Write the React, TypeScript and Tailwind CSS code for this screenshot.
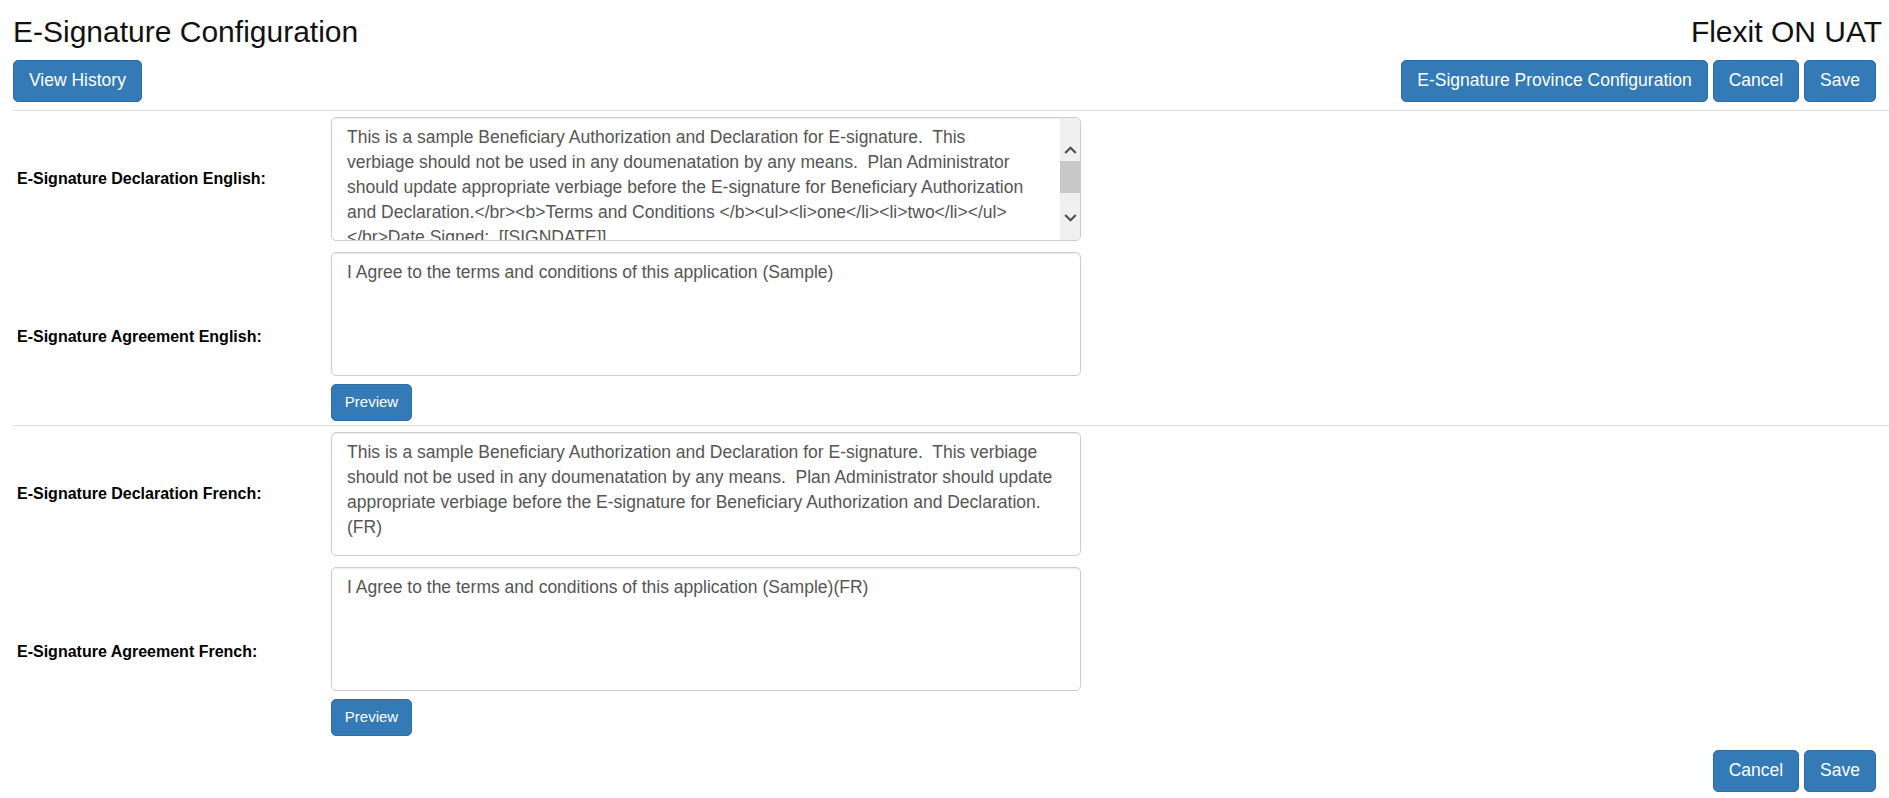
import React from "react";

// ─── Data ─────────────────────────────────────────────────────────────────────

const declarationEn = [
  "This is a sample Beneficiary Authorization and Declaration for E-signature.  This",
  "verbiage should not be used in any doumenatation by any means.  Plan Administrator",
  "should update appropriate verbiage before the E-signature for Beneficiary Authorization",
  "and Declaration.</br><b>Terms and Conditions </b><ul><li>one</li><li>two</li></ul>",
  "</br>Date Signed:  [[SIGNDATE]]",
].join("\n");

const declarationFr =
  "This is a sample Beneficiary Authorization and Declaration for E-signature.  This verbiage should not be used in any doumenatation by any means.  Plan Administrator should update appropriate verbiage before the E-signature for Beneficiary Authorization and Declaration.(FR)";

const btn =
  "h-[42px] rounded-[5px] border border-[#2e6da4] bg-[#337ab7] px-[15px] text-[17.5px] leading-none text-white";

const box =
  "h-[124px] overflow-hidden rounded-[5px] border border-[#ccc] bg-white shadow-[inset_0_1px_1px_rgba(0,0,0,0.075)]";

// ─── Pieces ───────────────────────────────────────────────────────────────────

function FakeTextarea({ text, scroll }: { text: string; scroll?: boolean }) {
  return (
    <div className={`${box} flex`}>
      <div
        className={`min-w-0 flex-1 px-[15px] py-[7px] text-[17.5px] leading-[25px] text-[#555] ${
          scroll ? "whitespace-pre" : "whitespace-pre-wrap"
        }`}
      >
        {text}
      </div>
      {scroll && (
        <div className="flex w-[20px] shrink-0 flex-col items-center bg-[#f0f0f0]">
          <svg className="mt-[28px]" width="13" height="8" viewBox="0 0 13 8">
            <path d="M1.2 7 L6.5 1.8 L11.8 7" fill="none" stroke="#505050" strokeWidth="2.2" />
          </svg>
          <div className="mt-[7px] h-[32px] w-full bg-[#c8c8c8]" />
          <svg className="mt-[21px]" width="13" height="8" viewBox="0 0 13 8">
            <path d="M1.2 1 L6.5 6.2 L11.8 1" fill="none" stroke="#505050" strokeWidth="2.2" />
          </svg>
        </div>
      )}
    </div>
  );
}

function Row({
  label,
  children,
}: {
  label: string;
  children: React.ReactNode;
}) {
  return (
    <div className="grid grid-cols-[318px_750px] items-center">
      <label className="pl-[4px] text-[16px] font-bold text-black">{label}</label>
      <div className="flex flex-col">{children}</div>
    </div>
  );
}

function PreviewButton() {
  return (
    <button className="mt-[8px] h-[37px] w-[81px] rounded-[5px] border border-[#2e6da4] bg-[#337ab7] text-[15px] text-white">
      Preview
    </button>
  );
}

// ─── Page ─────────────────────────────────────────────────────────────────────

export default function App() {
  return (
    <div className="min-h-[798px] bg-white px-[13px] font-['Liberation_Sans',Arial,sans-serif]">
      {/* Header */}
      <div className="flex items-start justify-between pt-[15px]">
        <h3 className="text-[30px] leading-[33px] text-[#111]">E-Signature Configuration</h3>
        <h3 className="-mr-[6px] text-[30px] leading-[33px] text-[#111]">Flexit ON UAT</h3>
      </div>

      <div className="mt-[12px] flex justify-between">
        <button className={btn}>View History</button>
        <div className="flex gap-[5px]">
          <button className={btn}>E-Signature Province Configuration</button>
          <button className={btn}>Cancel</button>
          <button className={btn}>Save</button>
        </div>
      </div>

      <hr className="-mr-[13px] mt-[8px] border-t border-[#ddd]" />

      {/* English */}
      <div className="mt-[6px] flex flex-col">
        <Row label="E-Signature Declaration English:">
          <FakeTextarea text={declarationEn} scroll />
        </Row>
        <div className="mt-[11px]">
          <Row label="E-Signature Agreement English:">
            <FakeTextarea text="I Agree to the terms and conditions of this application (Sample)" />
            <PreviewButton />
          </Row>
        </div>
      </div>

      <hr className="-mr-[13px] mt-[4px] border-t border-[#ddd]" />

      {/* French */}
      <div className="mt-[6px] flex flex-col">
        <Row label="E-Signature Declaration French:">
          <FakeTextarea text={declarationFr} />
        </Row>
        <div className="mt-[11px]">
          <Row label="E-Signature Agreement French:">
            <FakeTextarea text="I Agree to the terms and conditions of this application (Sample)(FR)" />
            <PreviewButton />
          </Row>
        </div>
      </div>

      <div className="mt-[14px] flex justify-end gap-[5px]">
        <button className={btn}>Cancel</button>
        <button className={btn}>Save</button>
      </div>
    </div>
  );
}
